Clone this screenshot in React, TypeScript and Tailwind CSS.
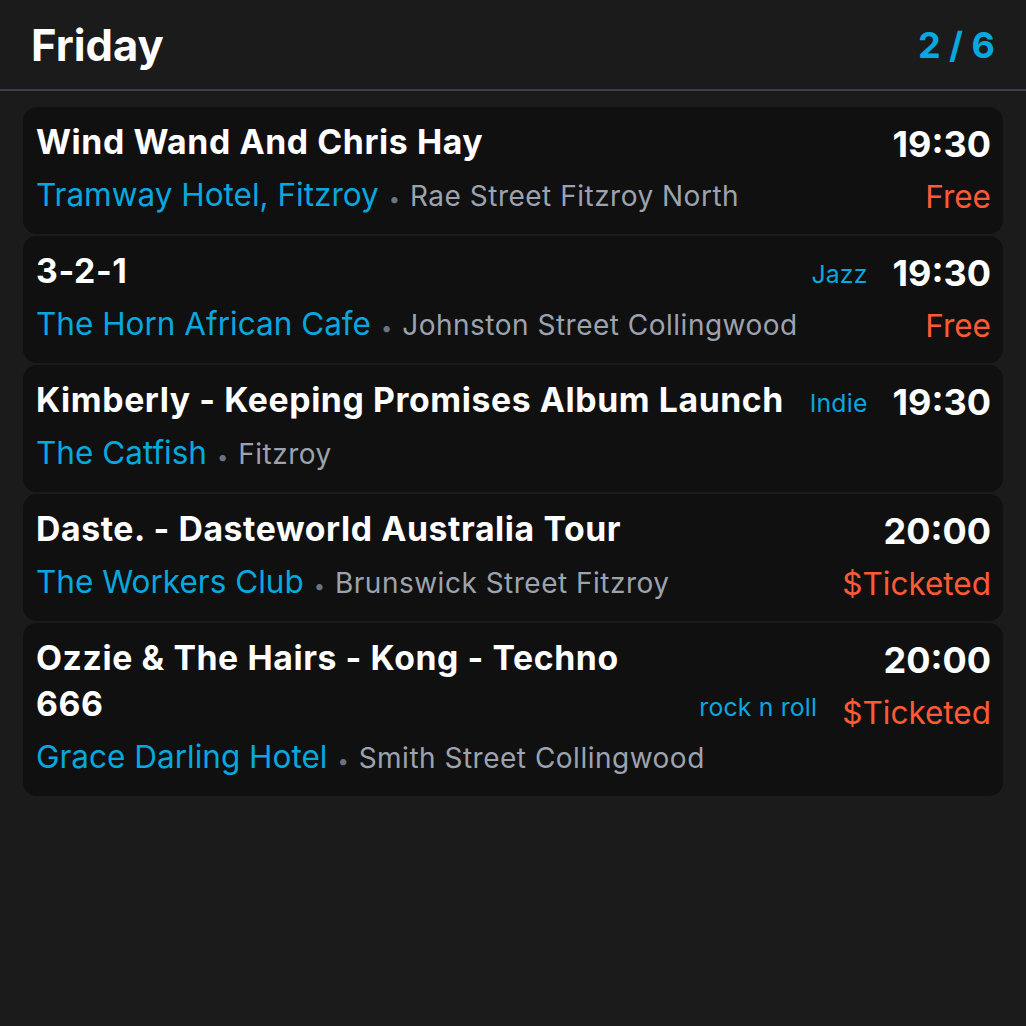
import React from "react";

type Ev = {
  title: string;
  genre?: string;
  venue: string;
  address: string;
  time: string;
  price?: string;
};

const events: Ev[] = [
  { title: "Wind Wand And Chris Hay", venue: "Tramway Hotel, Fitzroy", address: "Rae Street Fitzroy North", time: "19:30", price: "Free" },
  { title: "3-2-1", genre: "Jazz", venue: "The Horn African Cafe", address: "Johnston Street Collingwood", time: "19:30", price: "Free" },
  { title: "Kimberly - Keeping Promises Album Launch", genre: "Indie", venue: "The Catfish", address: "Fitzroy", time: "19:30" },
  { title: "Daste. - Dasteworld Australia Tour", venue: "The Workers Club", address: "Brunswick Street Fitzroy", time: "20:00", price: "$Ticketed" },
  { title: "Ozzie & The Hairs - Kong - Techno 666", genre: "rock n roll", venue: "Grace Darling Hotel", address: "Smith Street Collingwood", time: "20:00", price: "$Ticketed" },
];

function Card({ e }: { e: Ev }) {
  return (
    <div className="flex gap-[25px] rounded-[14px] bg-[#101010] pl-[13px] pr-[12px] pt-[12px] pb-[15.5px]">
      <div className="flex min-w-0 flex-1 flex-col">
        <div className="flex items-end gap-[17px]">
          <div className="min-w-0 flex-1 text-[33.75px] font-bold leading-[46.4px] tracking-[0.6px] text-white">{e.title}</div>
          {e.genre && (
            <div className="shrink-0 pb-[3px] text-[24.75px] leading-[34px] tracking-[0.2px] text-[#07a7df]">{e.genre}</div>
          )}
        </div>
        <div className="mt-[6px] flex h-[47px] items-baseline whitespace-nowrap">
          <span className="text-[31.5px] leading-[47px] text-[#07a7df]">{e.venue}</span>
          <span className="mx-[10px] text-[20px] leading-[47px] text-[#6b7280]">•</span>
          <span className="text-[28px] leading-[47px] tracking-[0.5px] text-[#9ca3af]">{e.address}</span>
        </div>
      </div>
      <div className="flex shrink-0 flex-col items-end pt-[2px]">
        <div className="text-[36px] font-bold leading-[46px] text-white">{e.time}</div>
        {e.price && (
          <div className="mt-[8px] text-[31.5px] leading-[43px] text-[#ff5a36]">{e.price}</div>
        )}
      </div>
    </div>
  );
}

export default function App() {
  return (
    <div
      className="flex h-[1026px] w-[1026px] flex-col bg-[#1b1b1b] text-white"
      style={{ fontFamily: "Inter, 'Noto Sans', sans-serif" }}
    >
      <div className="flex h-[91px] shrink-0 items-center justify-between border-b-2 border-[#3b404c] pl-[31px] pr-[31px]">
        <div className="text-[43.5px] font-bold leading-[56px]">Friday</div>
        <div className="text-[36px] font-bold leading-[48px] text-[#07a7df]">2 / 6</div>
      </div>
      <div className="flex flex-col gap-[2px] px-[23px] pt-[16px]">
        {events.map((e, i) => (
          <Card key={i} e={e} />
        ))}
      </div>
    </div>
  );
}
